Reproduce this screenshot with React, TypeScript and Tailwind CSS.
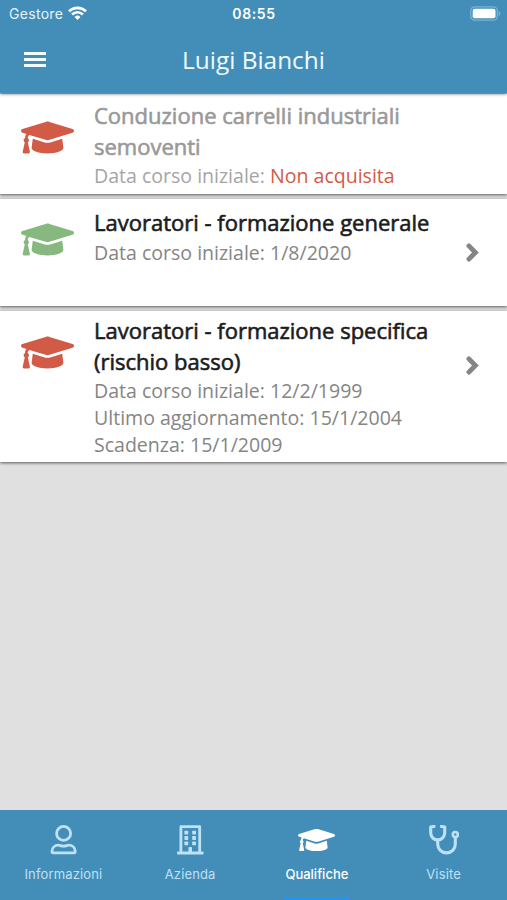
import type { ReactNode } from "react";
import { FaGraduationCap } from "react-icons/fa";

function StatusBar() {
  return (
    <div className="flex h-[27px] items-center justify-between pl-[9px] pr-[6px] font-['Inter',sans-serif] text-white">
      <div className="flex w-[200px] items-center gap-[5px]">
        <span className="text-[14px] leading-[27px] tracking-[0.3px] text-[#e4f3fb]">Gestore</span>
        <svg viewBox="0 0 19 14" className="h-[14px] w-[19px] -translate-y-px">
          <g fill="none" stroke="#fff" strokeWidth="2.6">
            <path d="M1 5.3a12.2 12.2 0 0 1 17 0" />
            <path d="M4.1 8.5a7.7 7.7 0 0 1 10.8 0" />
          </g>
          <path d="M9.5 14 6.6 11a4.1 4.1 0 0 1 5.8 0z" fill="#fff" />
        </svg>
      </div>
      <span className="-translate-x-px text-[14px] font-semibold leading-[27px] tracking-[0.6px]">08:55</span>
      <div className="flex w-[200px] justify-end">
        <svg viewBox="0 0 31 15" className="h-[15px] w-[31px]">
          <rect x="0.8" y="0.8" width="26.5" height="13.4" rx="4" fill="none" stroke="#7ab2d3" strokeWidth="1.3" />
          <rect x="2.7" y="2.7" width="22.8" height="9.6" rx="2" fill="#fff" />
          <path d="M28.7 5v5c2.2-1 2.2-4 0-5z" fill="#7ab2d3" />
        </svg>
      </div>
    </div>
  );
}

function Header() {
  return (
    <header className="relative z-10 h-[93px] shrink-0 bg-[#438eb9] shadow-[0_1px_3px_rgba(0,0,0,0.55)]">
      <StatusBar />
      <div className="grid h-[65px] grid-cols-[70px_1fr_70px] items-center">
        <div className="ml-6 flex w-[22px] flex-col gap-[3px]">
          <div className="h-[3px] bg-[#f2fbff]" />
          <div className="h-[3px] bg-[#f2fbff]" />
          <div className="h-[3px] bg-[#f2fbff]" />
        </div>
        <h1 className="-mt-px text-center text-[24.4px] leading-[33px] text-[#f2fbff]">Luigi Bianchi</h1>
      </div>
    </header>
  );
}

function Chevron() {
  return (
    <svg viewBox="0 0 13 19" className="h-[19px] w-[13px]">
      <path d="M2.9 2.9 9.4 9.5 2.9 16.1" fill="none" stroke="#858585" strokeWidth="4.8" strokeLinecap="round" />
    </svg>
  );
}

type CardProps = {
  title: string;
  size: string;
  cap: string;
  titleColor?: string;
  textColor?: string;
  arrow?: string;
  children: ReactNode;
};

function Card({
  title,
  size,
  cap,
  titleColor = "text-[#1c1c1c]",
  textColor = "text-[#858585]",
  arrow,
  children,
}: CardProps) {
  return (
    <article className={`flex bg-white shadow-[0_1px_3px_rgba(0,0,0,0.6)] ${size}`}>
      <div className="w-[94px] shrink-0 pl-[20.5px]">
        <FaGraduationCap className={`h-[43px] w-[53px] ${cap}`} />
      </div>
      <div className="w-[350px] shrink-0">
        <h2 className={`-mt-px mb-px text-[22px] leading-[30.5px] [-webkit-text-stroke:0.6px_currentColor] ${titleColor}`}>
          {title}
        </h2>
        <div className={`text-[19.55px] leading-[27px] ${textColor}`}>{children}</div>
      </div>
      {arrow && (
        <div className={`flex flex-1 justify-end pr-[28px] ${arrow}`}>
          <Chevron />
        </div>
      )}
    </article>
  );
}

function UserIcon() {
  return (
    <svg viewBox="0 0 30 30" className="size-[30px]" fill="none" stroke="currentColor" strokeWidth="2.8">
      <circle cx="15.6" cy="8.4" r="7" />
      <path
        d="M10.4 20.2c1.8 0 2.5.9 5.2.9s3.4-.9 5.2-.9c3.6 0 6.4 2.6 6.4 6.1v.5c0 .7-.4 1.1-1.1 1.1h-21c-.7 0-1.1-.4-1.1-1.1v-.5c0-3.5 2.8-6.1 6.4-6.1z"
        strokeLinejoin="round"
      />
    </svg>
  );
}

function BuildingIcon() {
  return (
    <svg viewBox="0 0 30 30" className="size-[30px]" fill="currentColor">
      <path d="M5.9 27.5V1.7h18.8v25.8" fill="none" stroke="currentColor" strokeWidth="2.8" strokeLinejoin="round" />
      <rect x="2" y="26.6" width="26.5" height="2.8" rx="0.7" />
      <rect x="9.4" y="5.7" width="3.8" height="3.8" rx="0.7" />
      <rect x="17.2" y="5.7" width="3.8" height="3.8" rx="0.7" />
      <rect x="9.4" y="11.1" width="3.8" height="3.8" rx="0.7" />
      <rect x="17.2" y="11.1" width="3.8" height="3.8" rx="0.7" />
      <rect x="9.4" y="16.5" width="3.8" height="3.8" rx="0.7" />
      <rect x="17.2" y="16.5" width="3.8" height="3.8" rx="0.7" />
      <rect x="13.5" y="22" width="3.5" height="6" rx="0.7" />
    </svg>
  );
}

function StethoscopeIcon() {
  return (
    <svg viewBox="0 0 30 30" className="size-[30px]" fill="none" stroke="currentColor" strokeWidth="3.1" strokeLinecap="round" strokeLinejoin="round">
      <path d="M5 1.4 1.7 2v5.8c0 4 3 7.1 7 7.1s7-3.1 7-7.1V2l-3.3-.6" />
      <path d="M8.7 15.5v3.7c0 4.8 3.9 8.7 8.8 8.7s8.8-3.9 8.8-8.7v-7" />
      <circle cx="26.3" cy="9.5" r="2.5" strokeWidth="2.6" />
    </svg>
  );
}

type TabProps = { label: string; icon: ReactNode; active?: boolean };

function Tab({ label, icon, active = false }: TabProps) {
  return (
    <div className={`flex flex-1 flex-col items-center ${active ? "text-white" : "text-[#bfe1f6]"}`}>
      <div className="flex h-[60px] items-center">{icon}</div>
      <span
        className={`-mt-[5px] h-[32px] font-['Inter',sans-serif] text-[13px] leading-[18px] ${active ? "font-medium" : "tracking-[0.15px]"}`}
      >
        {label}
      </span>
      {active && <div className="h-[3px] w-[66px] bg-[#2196f3]" />}
    </div>
  );
}

export default function App() {
  return (
    <div className="flex h-[900px] w-[507px] flex-col overflow-hidden bg-[#e0e0e0] font-['Open_Sans',sans-serif]">
      <Header />
      <main className="flex flex-1 flex-col gap-[5px] pt-px">
        <Card
          title="Conduzione carrelli industriali semoventi"
          size="h-[100px] pt-[7px]"
          cap="mt-[15px] text-[#d15b47]"
          titleColor="text-[#999]"
          textColor="text-[#a5a5a5]"
        >
          Data corso iniziale: <span className="text-[#d15b47]">Non acquisita</span>
        </Card>
        <Card
          title="Lavoratori - formazione generale"
          size="h-[107px] pt-[9px]"
          cap="mt-[10px] text-[#87b87f]"
          arrow="pt-[35px]"
        >
          <p>Data corso iniziale: 1/8/2020</p>
        </Card>
        <Card
          title="Lavoratori - formazione specifica (rischio basso)"
          size="h-[151px] pt-[5px]"
          cap="mt-[15px] text-[#d15b47]"
          arrow="pt-[40px]"
        >
          <p>Data corso iniziale: 12/2/1999</p>
          <p>Ultimo aggiornamento: 15/1/2004</p>
          <p>Scadenza: 15/1/2009</p>
        </Card>
      </main>
      <nav className="flex h-[90px] shrink-0 bg-[#438eb9]">
        <Tab label="Informazioni" icon={<UserIcon />} />
        <Tab label="Azienda" icon={<BuildingIcon />} />
        <Tab label="Qualifiche" icon={<FaGraduationCap className="h-[30px] w-[37px]" />} active />
        <Tab label="Visite" icon={<StethoscopeIcon />} />
      </nav>
    </div>
  );
}
